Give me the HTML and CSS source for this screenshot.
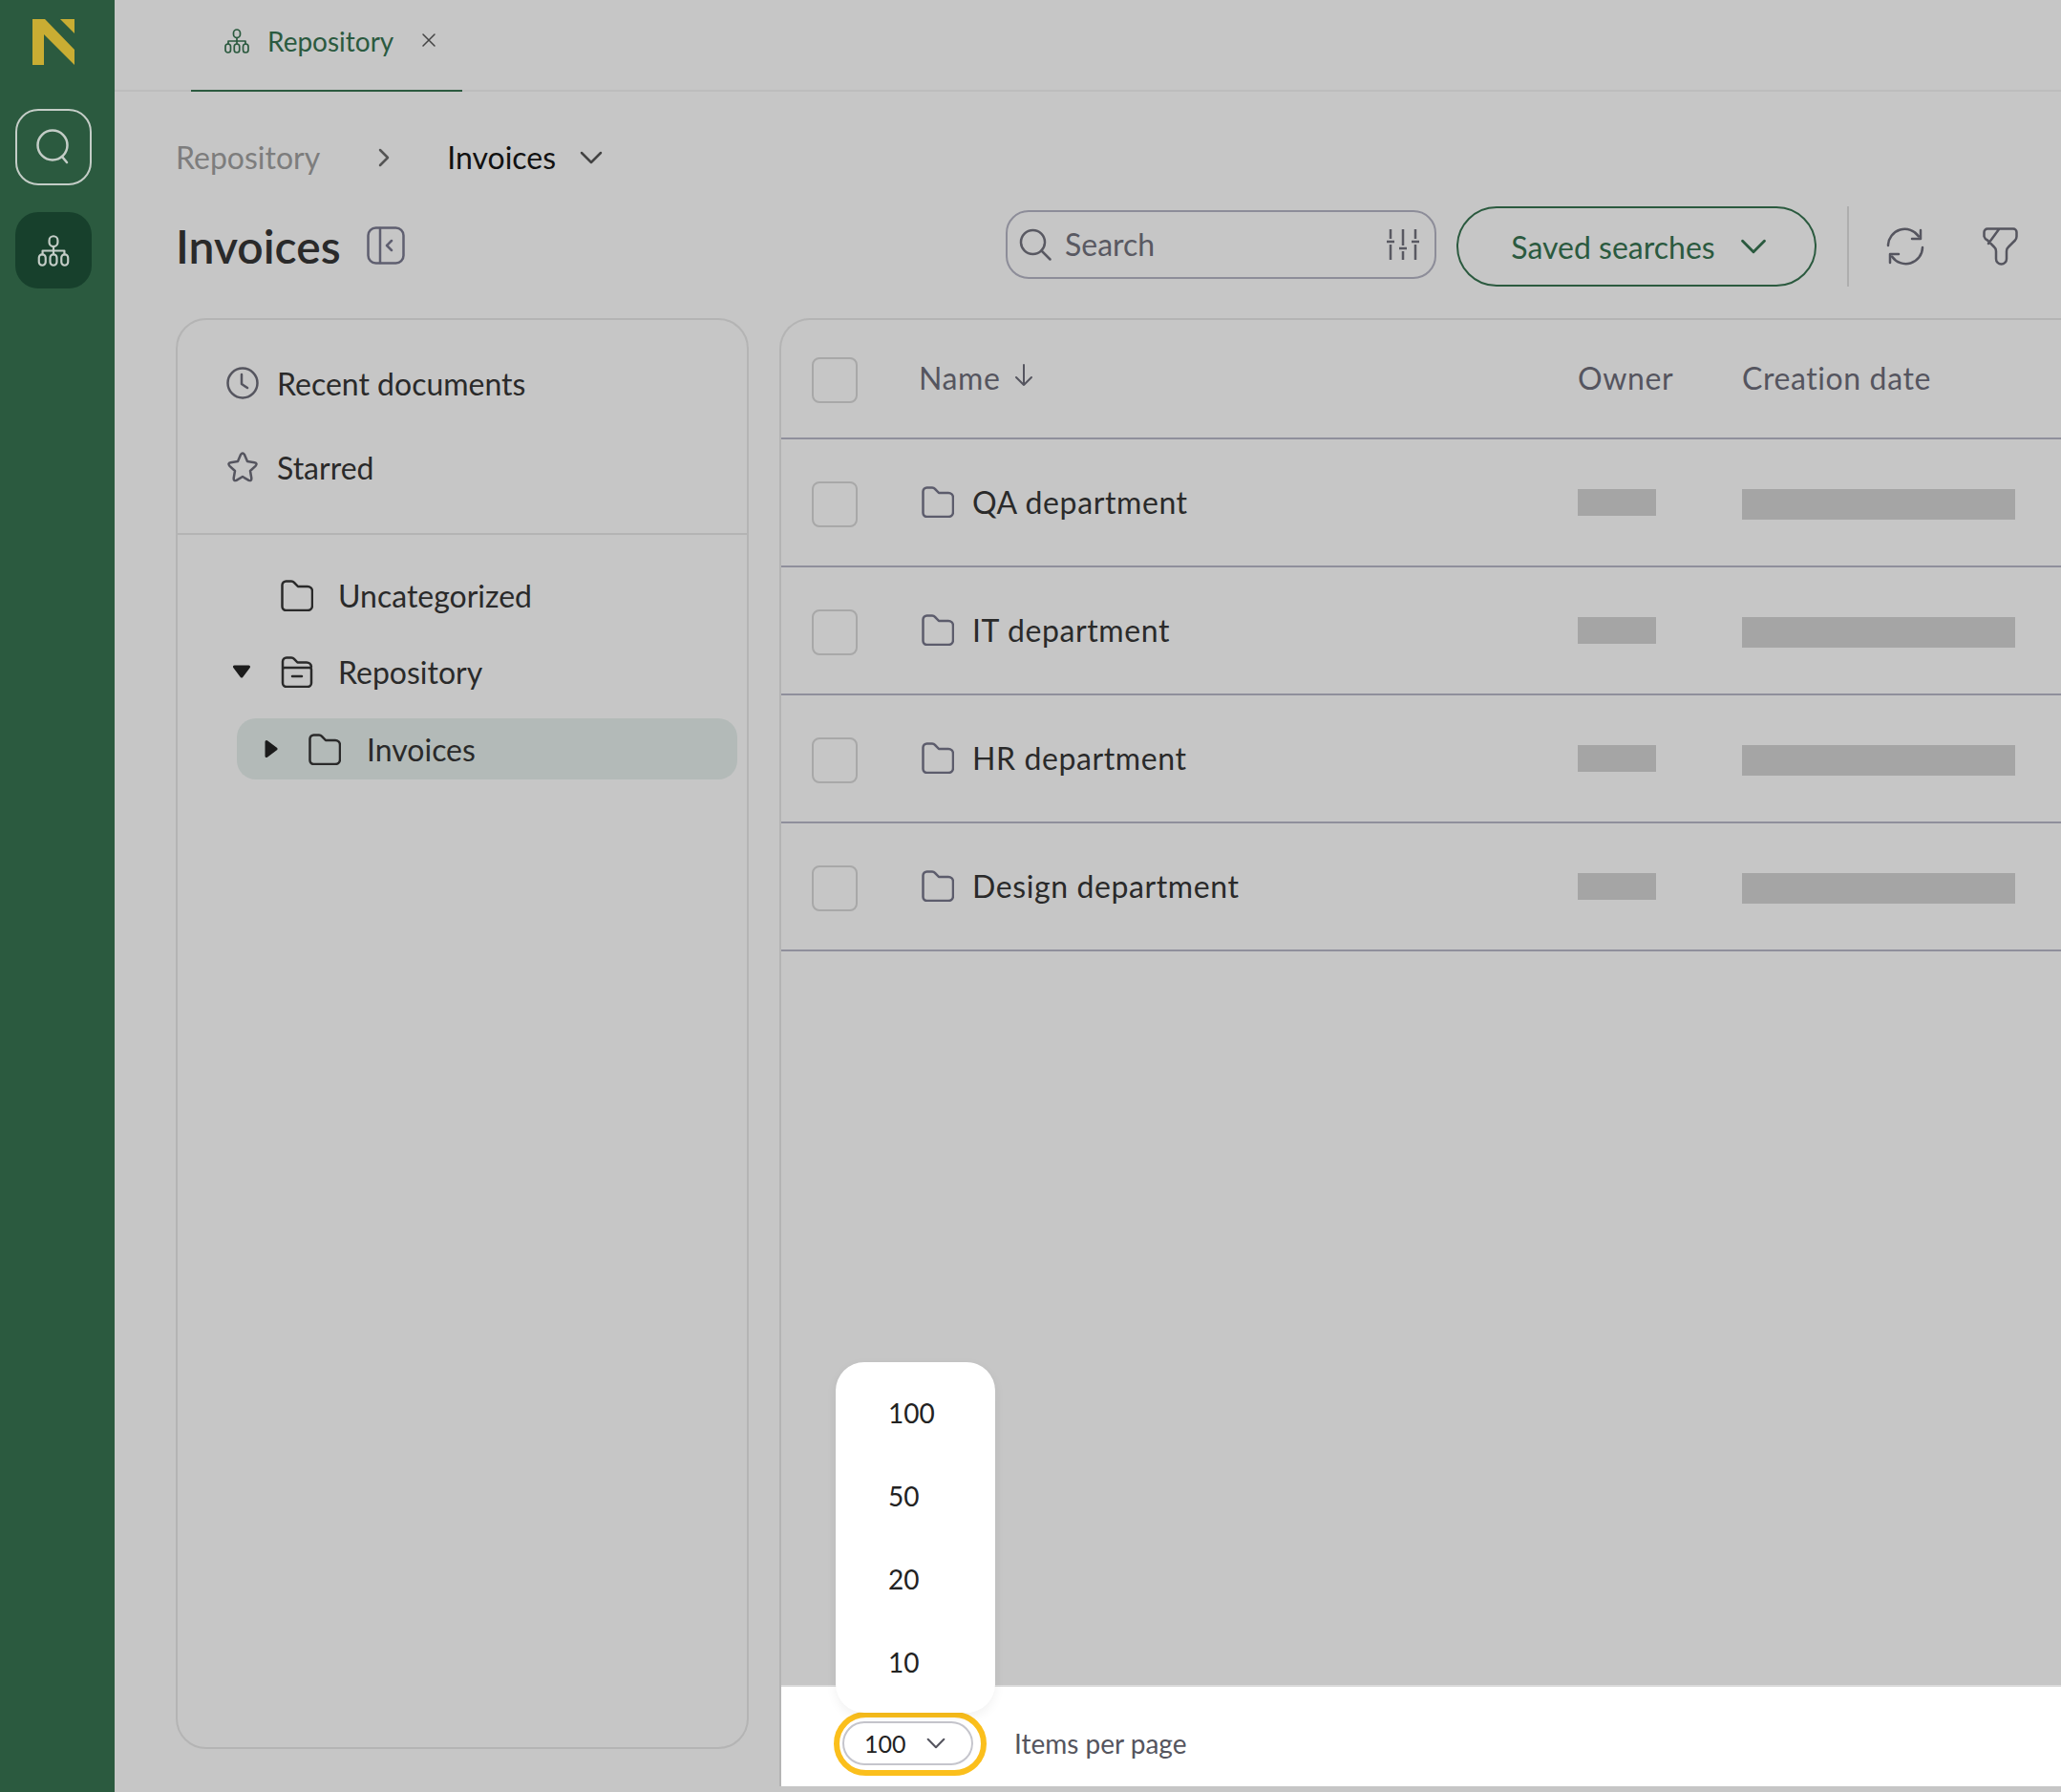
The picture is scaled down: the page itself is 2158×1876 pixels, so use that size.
FILE: index.html
```html
<!DOCTYPE html>
<html lang="en">
  <head>
    <meta charset="UTF-8" />
    <meta name="viewport" content="width=device-width, initial-scale=1.0" />
    <title>Invoices</title>
    <link rel="stylesheet" href="styles.css">
  </head>
  <body>
    <svg class="icon-defs" aria-hidden="true">
      <symbol id="i-tree" viewBox="0 0 28 26">
        <rect x="10.500" y="1" width="7" height="8.500" rx="3.500" />
        <path d="M14 9.500v6M5 16v-3h18v3" />
        <rect x="2" y="16" width="5.500" height="9" rx="2.750" />
        <rect x="11.250" y="16" width="5.500" height="9" rx="2.750" />
        <rect x="20.500" y="16" width="5.500" height="9" rx="2.750" />
      </symbol>
      <symbol id="i-folder" viewBox="0 0 34 33">
        <path d="M1.500 5.500a4 4 0 0 1 4-4h5.500a4 4 0 0 1 3 1.300l4 4.200h10a5 5 0 0 1 5 5v15a5 5 0 0 1-5 5h-22.500a4 4 0 0 1-4-4z" />
      </symbol>
      <symbol id="i-chevron" viewBox="0 0 24 14">
        <path d="M2 2l10 10 10-10" />
      </symbol>
    </svg>

    <nav class="rail">
      <svg class="logo" viewBox="0 0 44 48">
        <polygon points="0,0 13,0 44,32 44,48 12,16 12,48 0,48" />
        <polygon points="29,0 44,0 44,15" />
      </svg>
      <button class="rail-btn rail-btn-search">
        <svg width="40" height="40" viewBox="0 0 40 40">
          <circle cx="19" cy="18" r="15.500" />
          <path d="M29 30l5 6" />
        </svg>
      </button>
      <button class="rail-btn rail-btn-active">
        <svg class="tree-icon" width="36" height="33"><use href="#i-tree" /></svg>
      </button>
    </nav>

    <div class="main">
      <div class="tabs">
        <div class="tab">
          <svg class="tab-icon tree-icon" width="28" height="26"><use href="#i-tree" /></svg>
          <span>Repository</span>
          <svg class="tab-close" width="16" height="16" viewBox="0 0 16 16">
            <path d="M2 2l12 12M14 2L2 14" />
          </svg>
        </div>
      </div>

      <div class="crumbs">
        <span class="crumb-link">Repository</span>
        <svg class="crumb-sep" width="12" height="20" viewBox="0 0 12 20">
          <path d="M2 2l8 8-8 8" />
        </svg>
        <span class="crumb-current">Invoices</span>
        <svg class="crumb-down" width="24" height="14"><use href="#i-chevron" /></svg>
      </div>

      <div class="toolbar">
        <h1 class="page-title">Invoices</h1>
        <svg class="panel-toggle" width="40" height="40" viewBox="0 0 40 40">
          <rect x="1.500" y="1.500" width="37" height="37" rx="8" />
          <path d="M14 2v36M26 15l-5 5 5 5" />
        </svg>
        <div class="toolbar-actions">
          <div class="search">
            <svg class="search-icon" width="34" height="34" viewBox="0 0 34 34">
              <circle cx="14.500" cy="14.500" r="12.500" />
              <path d="M23.500 23.500l9 9" />
            </svg>
            <span class="search-text">Search</span>
            <svg class="search-tune" width="34" height="34" viewBox="0 0 34 34">
              <path d="M4 1v10M4 17v16M17 1v17M17 24v9M30 1v10M30 17v16M0 14h8M13 21h8M26 14h8" />
            </svg>
          </div>
          <button class="saved-btn">
            <span>Saved searches</span>
            <svg width="28" height="16" viewBox="0 0 24 14"><use href="#i-chevron" /></svg>
          </button>
          <div class="toolbar-divider"></div>
          <svg class="tool-icon tool-refresh" width="40" height="40" viewBox="0 0 40 40">
            <path d="M2 19a17.500 17.500 0 0 1 32-9.500M38 21a17.500 17.500 0 0 1-32 9.500" />
            <path d="M36 3v9h-9M4 37v-9h9" />
          </svg>
          <svg class="tool-icon" width="37" height="40" viewBox="0 0 37 40">
            <path d="M5 1.500h27a3.500 3.500 0 0 1 3.500 3.500v4.500a6 6 0 0 1-1.500 4l-7 7a6 6 0 0 0-2 4.500v8a5.500 5.500 0 0 1-11 0v-8a6 6 0 0 0-2-4.500l-7-7a6 6 0 0 1-3.500-4v-4.500a3.500 3.500 0 0 1 3.500-3.500zM17 2L6 17" />
          </svg>
        </div>
      </div>

      <div class="content">
        <aside class="side-panel">
          <div class="quick-links">
            <div class="quick-link">
              <svg width="34" height="34" viewBox="0 0 34 34">
                <circle cx="17" cy="17" r="15.500" />
                <path d="M16 8v10l6 4" />
              </svg>
              <span>Recent documents</span>
            </div>
            <div class="quick-link">
              <svg width="34" height="34" viewBox="0 0 34 34">
                <path d="M15 4Q17 1 19 4L22 11L29.500 12.200Q33 13 30.500 15.800L25 21L26.300 28.500Q26.500 32 23.500 30.800L17 27L10.500 30.800Q7.500 32 7.700 28.500L9 21L3.500 15.800Q1 13 4.500 12.200L12 11z" />
              </svg>
              <span>Starred</span>
            </div>
          </div>
          <div class="tree">
            <div class="tree-row">
              <span class="tree-caret"></span>
              <svg width="34" height="33"><use href="#i-folder" /></svg>
              <span>Uncategorized</span>
            </div>
            <div class="tree-row">
              <span class="tree-caret">
                <svg width="20" height="14" viewBox="0 0 20 14"><path d="M2.500 2h15L10 12z" /></svg>
              </span>
              <svg width="34" height="33" viewBox="0 0 34 33">
                <path d="M2 14v-8.500a4 4 0 0 1 4-4h5a4 4 0 0 1 3 1.300l3.500 3.700h9.500a5 5 0 0 1 5 4.500M2 14a2 2 0 0 1 2-2h26a2 2 0 0 1 2 2v14a4 4 0 0 1-4 4H6a4 4 0 0 1-4-4zM12 21h10" />
              </svg>
              <span>Repository</span>
            </div>
            <div class="tree-row tree-row-active">
              <span class="tree-caret">
                <svg width="14" height="20" viewBox="0 0 14 20"><path d="M2 2.500l10 7.500-10 7.500z" /></svg>
              </span>
              <svg width="34" height="33"><use href="#i-folder" /></svg>
              <span>Invoices</span>
            </div>
          </div>
        </aside>

        <section class="table-panel">
          <div class="table-row table-head">
            <span class="checkbox"></span>
            <span class="col-name">Name
              <svg width="20" height="24" viewBox="0 0 20 24"><path d="M10 1v21M2 14l8 8 8-8" /></svg>
            </span>
            <span>Owner</span>
            <span>Creation date</span>
          </div>
          <div class="table-row">
            <span class="checkbox"></span>
            <span class="folder-name">
              <svg width="34" height="33"><use href="#i-folder" /></svg>
              QA department
            </span>
            <span class="skeleton skeleton-owner"></span>
            <span class="skeleton skeleton-date"></span>
          </div>
          <div class="table-row">
            <span class="checkbox"></span>
            <span class="folder-name">
              <svg width="34" height="33"><use href="#i-folder" /></svg>
              IT department
            </span>
            <span class="skeleton skeleton-owner"></span>
            <span class="skeleton skeleton-date"></span>
          </div>
          <div class="table-row">
            <span class="checkbox"></span>
            <span class="folder-name">
              <svg width="34" height="33"><use href="#i-folder" /></svg>
              HR department
            </span>
            <span class="skeleton skeleton-owner"></span>
            <span class="skeleton skeleton-date"></span>
          </div>
          <div class="table-row">
            <span class="checkbox"></span>
            <span class="folder-name">
              <svg width="34" height="33"><use href="#i-folder" /></svg>
              Design department
            </span>
            <span class="skeleton skeleton-owner"></span>
            <span class="skeleton skeleton-date"></span>
          </div>

          <div class="pager">
            <ul class="page-menu">
              <li>100</li>
              <li>50</li>
              <li>20</li>
              <li>10</li>
            </ul>
            <div class="page-select">
              <span>100</span>
              <svg width="20" height="12" viewBox="0 0 24 14"><use href="#i-chevron" /></svg>
            </div>
            <span class="page-label">Items per page</span>
          </div>
        </section>
      </div>
    </div>
  </body>
</html>
```

FILE: styles.css
```css
* {
  box-sizing: border-box;
}

body {
  margin: 0;
  width: 2158px;
  height: 1876px;
  display: flex;
  overflow: hidden;
  background-color: #c6c6c6;
  font-family: Lato, "Open Sans", sans-serif;
  font-size: 32px;
  color: #2a2a2a;
}

svg {
  display: block;
  flex: none;
  fill: none;
  stroke: currentColor;
  stroke-width: 2.5;
  stroke-linecap: round;
  stroke-linejoin: round;
}

.icon-defs {
  position: absolute;
  width: 0;
  height: 0;
}

.tree-icon {
  stroke-width: 1.7;
}

/* left rail */
.rail {
  width: 120px;
  flex: none;
  display: flex;
  flex-direction: column;
  align-items: center;
  padding: 20px 8px 0 0;
  background-color: #2b5a3f;
}

.logo {
  width: 44px;
  height: 48px;
  margin-bottom: 46px;
  fill: #c9ad33;
  stroke: none;
}

.rail-btn {
  width: 80px;
  height: 80px;
  display: flex;
  align-items: center;
  justify-content: center;
  padding: 0;
  border-radius: 24px;
  color: #c4cdc7;
}

.rail-btn-search {
  margin-bottom: 28px;
  background: none;
  border: 2px solid #c4cdc7;
}

.rail-btn-active {
  background-color: #17402c;
  border: none;
}

/* tabs + breadcrumb */
.main {
  flex: 1;
  min-width: 0;
  display: flex;
  flex-direction: column;
}

.tabs {
  height: 96px;
  flex: none;
  padding-left: 80px;
  border-bottom: 2px solid #bdbdbd;
}

.tab {
  width: 284px;
  height: 96px;
  display: flex;
  align-items: center;
  padding: 0 0 9px 34px;
  border-bottom: 2px solid #2b5a3f;
  font-size: 28px;
  color: #2b5a3f;
}

.tab-icon {
  margin-right: 18px;
}

.tab-close {
  margin-left: 29px;
  margin-bottom: 1px;
  stroke-width: 1.500;
  color: #444;
}

.crumbs {
  height: 120px;
  flex: none;
  display: flex;
  align-items: center;
  padding: 17px 0 0 64px;
  line-height: 48px;
}

.crumb-link {
  color: #7d7d7d;
}

.crumb-sep {
  margin: 0 60px 0 61px;
  color: #555;
}

.crumb-current {
  color: #111;
}

.crumb-down {
  margin-left: 25px;
  color: #444;
}

/* title row */
.toolbar {
  height: 84px;
  flex: none;
  display: flex;
  align-items: center;
  padding: 0 45px 0 64px;
}

.page-title {
  margin: 0 27px 0 0;
  font-size: 48px;
  font-weight: 600;
  line-height: 84px;
}

.panel-toggle {
  margin-bottom: 2px;
  color: #5f5f70;
}

.toolbar-actions {
  margin-left: auto;
  display: flex;
  align-items: center;
}

.search {
  width: 451px;
  height: 72px;
  margin: 0 1px 5px 0;
  display: flex;
  align-items: center;
  padding: 0 16px 0 12px;
  border: 2px solid #8d8d99;
  border-radius: 24px;
  color: #595962;
}

.search-text {
  margin-left: 14px;
}

.search-tune {
  margin-left: auto;
  stroke-width: 2.5;
  stroke-linecap: butt;
}

.saved-btn {
  width: 377px;
  height: 84px;
  margin-left: 20px;
  display: flex;
  align-items: center;
  justify-content: center;
  gap: 26px;
  padding: 0 0 0 5px;
  background: none;
  border: 2px solid #2b5a3f;
  border-radius: 42px;
  font-family: inherit;
  font-size: 32px;
  color: #2b5a3f;
}

.toolbar-divider {
  width: 2px;
  height: 84px;
  margin: 0 39px 0 32px;
  background-color: #aeaeae;
}

.tool-icon {
  color: #55555f;
}

.tool-refresh {
  margin-right: 61px;
}

/* panels */
.content {
  flex: 1;
  min-height: 0;
  display: flex;
  gap: 32px;
  margin-top: 33px;
  padding-left: 64px;
}

.side-panel {
  width: 600px;
  flex: none;
  height: 1498px;
  border: 2px solid #b4b4b4;
  border-radius: 32px;
}

.quick-links {
  height: 225px;
  padding: 22px 0 0 51px;
  border-bottom: 2px solid #b4b4b4;
}

.quick-link {
  height: 88px;
  display: flex;
  align-items: center;
  gap: 19px;
}

.quick-link svg {
  color: #55555f;
}

.tree {
  padding: 23px 10px 0 48px;
}

.tree-row {
  height: 80px;
  display: flex;
  align-items: center;
}

.tree-row-active {
  height: 64px;
  margin-left: 14px;
  margin-top: 9px;
  background-color: #b3bab8;
  border-radius: 20px;
}

.tree-row > svg {
  margin-right: 26px;
}

.tree-row-active > svg {
  margin-right: 27px;
}

.tree-caret {
  width: 60px;
  flex: none;
  display: flex;
}

.tree-caret svg {
  fill: #1c1c1c;
  stroke: #1c1c1c;
  stroke-width: 3;
  margin-left: 9px;
}

.tree-row-active .tree-caret {
  width: 75px;
}

.tree-row-active .tree-caret svg {
  margin-left: 29px;
}

.table-panel {
  flex: 1;
  min-width: 0;
  height: 1537px;
  position: relative;
  display: flex;
  flex-direction: column;
  border-top: 2px solid #b4b4b4;
  border-left: 2px solid #b4b4b4;
  border-top-left-radius: 32px;
}

.table-row {
  height: 134px;
  flex: none;
  display: grid;
  grid-template-columns: 112px 690px 172px 1fr;
  align-items: center;
  padding-left: 32px;
  border-bottom: 2px solid #8f8f9c;
}

.table-head {
  height: 125px;
  padding-bottom: 2px;
  color: #55555f;
  letter-spacing: 0.6px;
}

.checkbox {
  width: 48px;
  height: 48px;
  margin-top: 3px;
  border: 2px solid #a8a8a8;
  border-radius: 8px;
}

.table-head .checkbox {
  margin-top: 5px;
}

.col-name {
  display: flex;
  align-items: center;
  gap: 15px;
}

.col-name svg {
  stroke-width: 2;
  margin-bottom: 5px;
}

.folder-name {
  display: flex;
  align-items: center;
  gap: 19px;
  padding: 0 0 1px 3px;
  letter-spacing: 0.6px;
}

.folder-name svg {
  color: #5c5c6c;
}

.skeleton {
  align-self: start;
  margin-top: 52px;
  background-color: #a5a5a5;
}

.skeleton-owner {
  width: 82px;
  height: 28px;
}

.skeleton-date {
  width: 286px;
  height: 32px;
}

/* pager + open menu */
.pager {
  height: 106px;
  flex: none;
  margin-top: auto;
  position: relative;
  display: flex;
  align-items: center;
  padding: 14px 0 0 64px;
  background-color: #fff;
  border-top: 2px solid #dcdcdc;
}

.page-select {
  width: 137px;
  height: 46px;
  position: relative;
  display: flex;
  align-items: center;
  gap: 21px;
  padding-left: 21px;
  border: 2px solid #c5c5cc;
  border-radius: 23px;
  font-size: 25px;
  color: #222;
}

.page-select::after {
  content: "";
  position: absolute;
  inset: -12px -16px -13px -11px;
  border: 6px solid #fbbf1c;
  border-radius: 36px;
}

.page-select svg {
  color: #55555f;
}

.page-label {
  margin-left: 43px;
  font-size: 28px;
  color: #55555e;
}

.page-menu {
  position: absolute;
  left: 57px;
  bottom: 77px;
  width: 167px;
  margin: 0;
  padding: 9px 0 10px;
  list-style: none;
  background-color: #fff;
  border-radius: 30px;
  box-shadow: 0 4px 12px rgba(0, 0, 0, 0.06);
  z-index: 2;
}

.page-menu li {
  height: 87px;
  display: flex;
  align-items: center;
  padding-left: 55px;
  font-size: 28px;
  color: #222;
}
```
